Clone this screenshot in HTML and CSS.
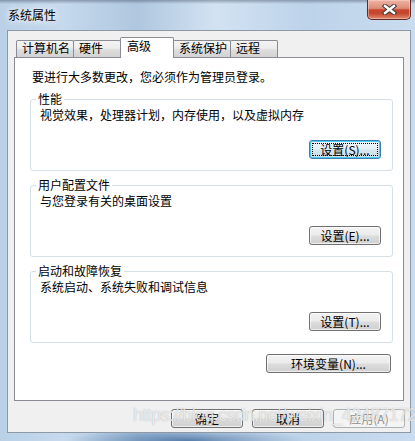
FILE: index.html
```html
<!DOCTYPE html>
<html lang="zh-CN">
<head>
<meta charset="utf-8">
<title>系统属性</title>
<link rel="stylesheet" href="styles.css">
</head>
<body>
<div class="window">
  <div class="titlebar">
    <span class="title">系统属性</span>
    <button class="close" aria-label="关闭">
      <svg width="15" height="11" viewBox="0 0 15 11">
        <path d="M3 2 L12 9 M12 2 L3 9" stroke="#3b3b3b" stroke-width="4.4" stroke-linecap="square" fill="none"/>
        <path d="M3 2 L12 9 M12 2 L3 9" stroke="#ffffff" stroke-width="2.4" stroke-linecap="square" fill="none"/>
      </svg>
    </button>
  </div>
  <div class="dialog">
    <div class="tabs">
      <div class="tab">计算机名</div>
      <div class="tab">硬件</div>
      <div class="tab active">高级</div>
      <div class="tab">系统保护</div>
      <div class="tab">远程</div>
    </div>
    <div class="panel">
      <p class="intro">要进行大多数更改，您必须作为管理员登录。</p>
      <fieldset class="group">
        <legend>性能</legend>
        <p class="desc">视觉效果，处理器计划，内存使用，以及虚拟内存</p>
        <div class="actions"><button class="btn focused">设置(S)...</button></div>
      </fieldset>
      <fieldset class="group">
        <legend>用户配置文件</legend>
        <p class="desc">与您登录有关的桌面设置</p>
        <div class="actions"><button class="btn">设置(E)...</button></div>
      </fieldset>
      <fieldset class="group">
        <legend>启动和故障恢复</legend>
        <p class="desc">系统启动、系统失败和调试信息</p>
        <div class="actions"><button class="btn">设置(T)...</button></div>
      </fieldset>
      <div class="env-row"><button class="btn env">环境变量(N)...</button></div>
    </div>
    <div class="footer">
      <button class="btn">确定</button>
      <button class="btn">取消</button>
      <button class="btn" disabled>应用(A)</button>
    </div>
  </div>
  <div class="watermark">https://blog.csdn.net/weixin_42487172</div>
</div>
</body>
</html>
```
FILE: styles.css
```css
body {
  margin: 0;
  font-family: "Noto Sans CJK SC", "Liberation Sans", sans-serif;
  font-size: 12px;
  color: #000;
}

.window {
  position: relative;
  width: 415px;
  height: 441px;
  box-sizing: border-box;
  display: flex;
  flex-direction: column;
  padding: 0 4px 8px 7px;
  overflow: hidden;
  background:
    linear-gradient(rgba(30, 40, 60, 0.35), rgba(30, 40, 60, 0) 4px),
    radial-gradient(ellipse 120px 14px at 45% 100%, rgba(50, 95, 150, 0.75), rgba(50, 95, 150, 0)),
    linear-gradient(90deg, #b9d0e7 0%, #c6d9ed 15%, #afc7df 33%, #d2e2f2 52%, #bdd3ea 74%, #cadcef 100%);
}

.titlebar {
  height: 30px;
  display: flex;
  justify-content: space-between;
  align-items: flex-start;
}

.title {
  margin: 8px 0 0 1px;
  line-height: 14px;
  text-shadow: 0 0 6px #fff, 0 0 9px #fff;
}

.close {
  width: 44px;
  height: 20px;
  padding: 0;
  border: 1px solid #5e2a22;
  border-top: 0;
  border-radius: 0 0 5px 5px;
  display: flex;
  align-items: center;
  justify-content: center;
  background: linear-gradient(#efb4a5 0%, #dd8c77 44%, #c8452c 52%, #c5462d 70%, #e08a6e 100%);
  box-shadow: inset 0 0 0 1px rgba(255, 220, 210, 0.45);
}

.dialog {
  flex: 1;
  border: 1px solid #8e99a5;
  background: #f0f0f0;
  display: flex;
  flex-direction: column;
  padding: 6px 6px 0;
}

.tabs {
  display: flex;
  align-items: flex-end;
  height: 20px;
  padding-left: 2px;
}

.tab {
  height: 17px;
  box-sizing: border-box;
  min-width: 48px;
  padding: 0 3px 0 5px;
  border: 1px solid #898c95;
  border-bottom: 0;
  border-radius: 2px 2px 0 0;
  line-height: 14px;
  white-space: nowrap;
  background: linear-gradient(#f4f4f4 0%, #ececec 45%, #dedede 55%, #d2d2d2 100%);
}

.tab + .tab {
  margin-left: -1px;
}

.tab.active {
  position: relative;
  z-index: 1;
  height: 21px;
  min-width: 54px;
  margin: 0 0 -1px -1px;
  padding: 1px 6px 0;
  background: #fff;
}

.panel {
  height: 344px;
  box-sizing: border-box;
  border: 1px solid #898c95;
  background: #fff;
  padding: 12px 10px 0 15px;
}

.intro {
  margin: 0 0 0 2px;
  line-height: 14px;
}

.group {
  margin: 8px 0 0;
  padding: 2px 11px 11px 9px;
  border: 1px solid #d5dfe5;
  border-radius: 3px;
  min-inline-size: 0;
}

.group + .group {
  margin-top: 7px;
}

.group legend {
  padding: 0 2px;
  margin-left: -4px;
  line-height: 14px;
}

.desc {
  margin: 0;
  line-height: 14px;
}

.actions {
  display: flex;
  justify-content: flex-end;
  margin-top: 18px;
}

.btn {
  position: relative;
  width: 72px;
  height: 19px;
  box-sizing: border-box;
  padding: 0;
  font: inherit;
  line-height: 17px;
  color: #000;
  border: 1px solid #707070;
  border-radius: 3px;
  background: linear-gradient(#f3f3f3 0%, #ebebeb 48%, #dddddd 52%, #cfcfcf 100%);
  box-shadow: inset 0 0 0 1px rgba(255, 255, 255, 0.65);
  white-space: nowrap;
}

.btn.focused {
  border-color: #3c7fb1;
  box-shadow: inset 0 0 0 1px #4fc8f2;
  background: linear-gradient(#eef7fb 0%, #e4f0f6 48%, #d6e6ee 52%, #c9dde8 100%);
}

.btn.focused::after {
  content: "";
  position: absolute;
  inset: 2px;
  border: 1px dotted #000;
}

.btn:disabled {
  color: #8f8f8f;
  border-color: #adb2b5;
  background: #f4f4f4;
  box-shadow: none;
}

.env-row {
  display: flex;
  justify-content: flex-end;
  margin: 11px 2px 0 0;
}

.btn.env {
  width: 125px;
}

.footer {
  display: flex;
  justify-content: flex-end;
  gap: 9px;
  margin: 8px -1px 0 0;
}

.watermark {
  position: absolute;
  left: 133px;
  top: 404px;
  font-family: "Liberation Sans", sans-serif;
  font-size: 18px;
  letter-spacing: -0.6px;
  line-height: 22px;
  color: rgba(255, 255, 255, 0.72);
  text-shadow: 0 0 1px rgba(110, 110, 110, 0.55);
  white-space: nowrap;
  pointer-events: none;
}
```
